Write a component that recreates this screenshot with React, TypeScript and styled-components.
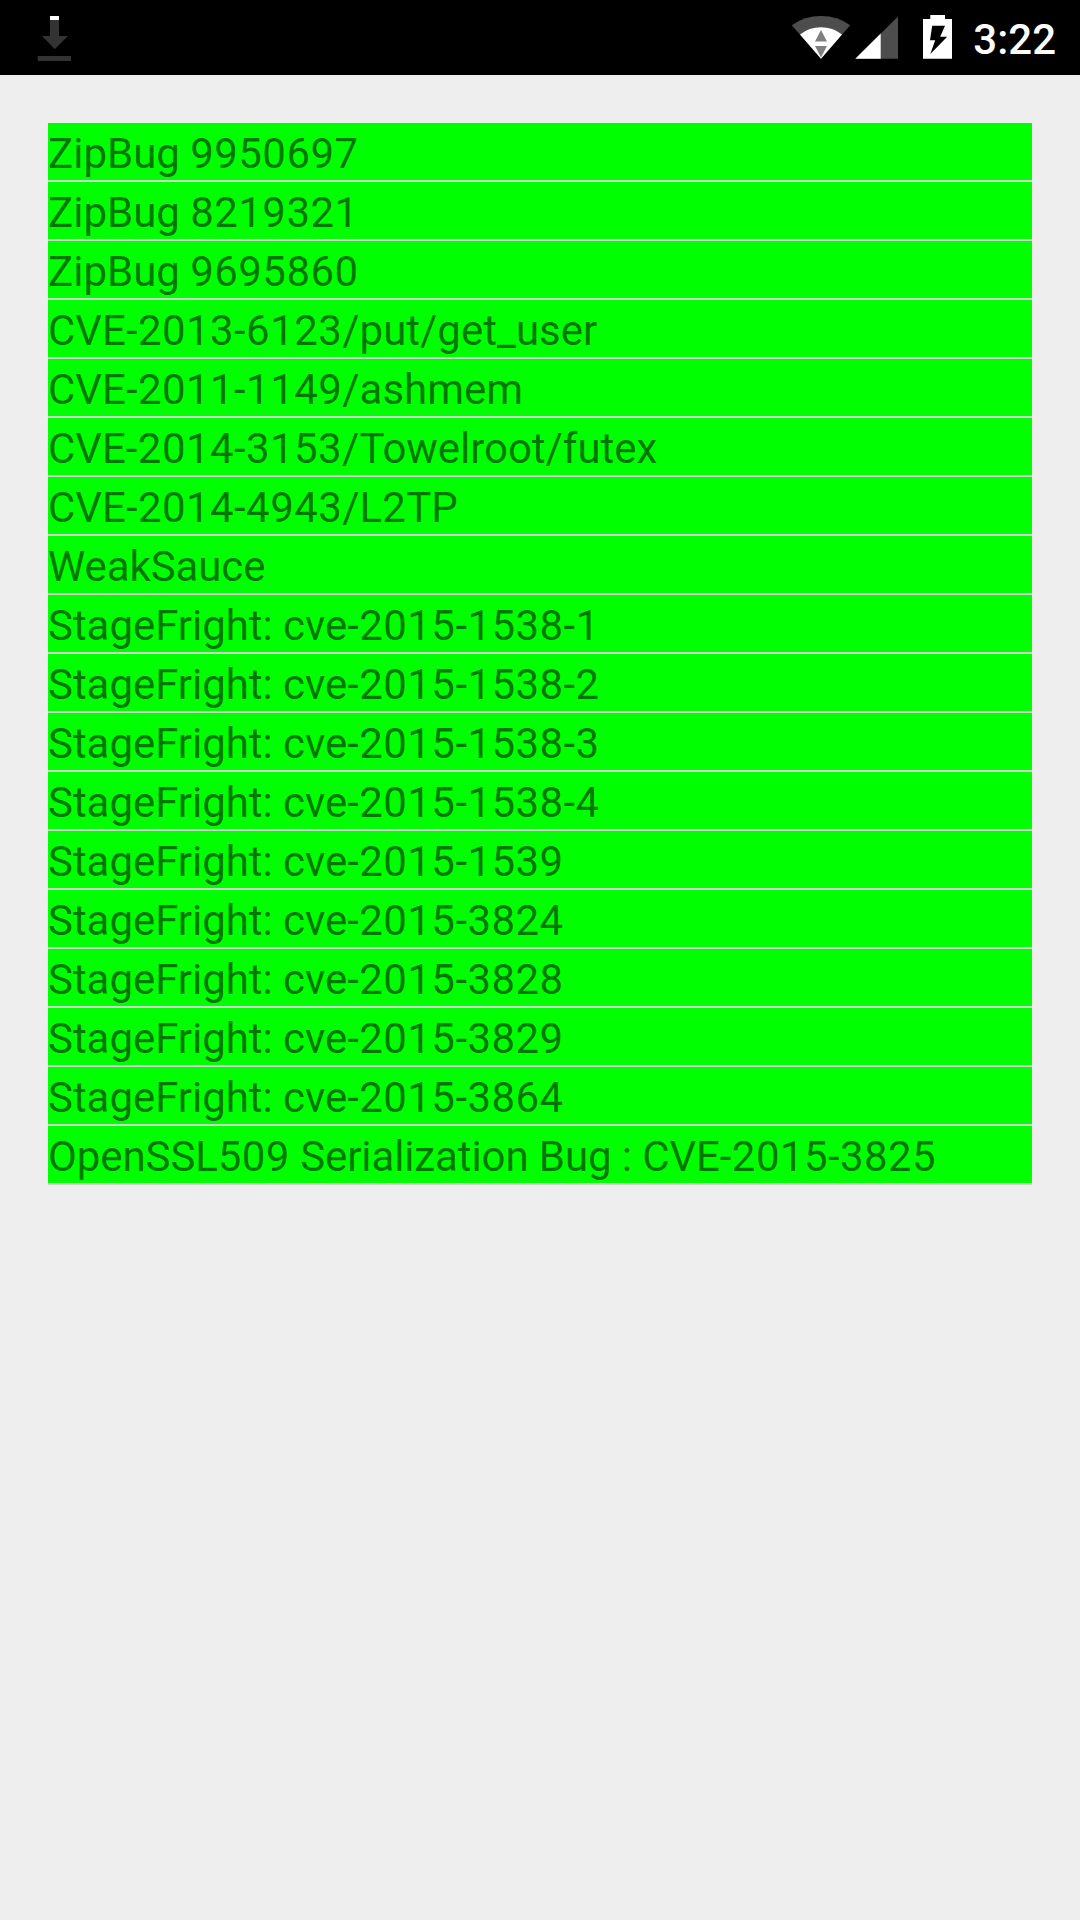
import React from "react";
import styled, { createGlobalStyle } from "styled-components";

const GlobalStyle = createGlobalStyle`
  html, body { margin: 0; background: #eeeeee; }
`;

const Screen = styled.div`
  display: flex;
  flex-direction: column;
  width: 1080px;
  height: 1920px;
  background: #eeeeee;
  font-family: Roboto, sans-serif;
  overflow: hidden;
`;

const StatusBar = styled.header`
  display: flex;
  justify-content: space-between;
  flex: none;
  height: 75px;
  box-sizing: border-box;
  padding: 0 24px 0 36px;
  background: #000;
`;

const StatusGroup = styled.div`
  display: flex;
`;

const Icon = styled.svg<{ $gap?: number }>`
  display: block;
  flex: none;
  height: 75px;
  margin-right: ${({ $gap = 0 }) => $gap}px;
`;

const Clock = styled.time`
  font-size: 42px;
  font-weight: 500;
  line-height: 49px;
  padding-top: 15px;
  color: #fff;
`;

const Content = styled.main`
  padding: 48px;
`;

const ResultList = styled.ul`
  list-style: none;
  margin: 0;
  padding: 0;
`;

const ResultRow = styled.li<{ $tracking: number }>`
  box-sizing: border-box;
  height: 59px;
  padding-top: 6px;
  border-bottom: 2px solid #d0d0d0;
  background: #00ff00;
  background-clip: padding-box;
  color: rgba(0, 0, 0, 0.54);
  font-size: 42px;
  line-height: 49px;
  letter-spacing: ${({ $tracking }) => $tracking}px;
  white-space: nowrap;
`;

const Digits = styled.span`
  letter-spacing: 0.42px;
`;

type Result = { name: string; tracking?: number };

const results: Result[] = [
  { name: "ZipBug 9950697" },
  { name: "ZipBug 8219321" },
  { name: "ZipBug 9695860" },
  { name: "CVE-2013-6123/put/get_user" },
  { name: "CVE-2011-1149/ashmem" },
  { name: "CVE-2014-3153/Towelroot/futex", tracking: -0.04 },
  { name: "CVE-2014-4943/L2TP" },
  { name: "WeakSauce", tracking: -0.1 },
  { name: "StageFright: cve-2015-1538-1", tracking: -0.04 },
  { name: "StageFright: cve-2015-1538-2", tracking: -0.04 },
  { name: "StageFright: cve-2015-1538-3", tracking: -0.04 },
  { name: "StageFright: cve-2015-1538-4", tracking: -0.04 },
  { name: "StageFright: cve-2015-1539", tracking: -0.04 },
  { name: "StageFright: cve-2015-3824", tracking: -0.04 },
  { name: "StageFright: cve-2015-3828", tracking: -0.04 },
  { name: "StageFright: cve-2015-3829", tracking: -0.04 },
  { name: "StageFright: cve-2015-3864", tracking: -0.04 },
  { name: "OpenSSL509 Serialization Bug : CVE-2015-3825", tracking: -0.1 },
];

// Numbers are set slightly wider than the letters around them.
const ResultName = ({ name }: { name: string }) => (
  <>
    {name
      .split(/([-\d]+)/)
      .map((part, i) => (i % 2 ? <Digits key={i}>{part}</Digits> : part))}
  </>
);

const DownloadIcon = () => (
  <Icon width="36" viewBox="36 0 36 75">
    <path d="M50 20H59V36H68L54.7 49.3L42 36H50Z" fill="#333" />
    <path d="M50 16H59V20H50Z" fill="#fff" />
    <path d="M37.8 56H71V61H37.8Z" fill="#333" />
  </Icon>
);

const WifiIcon = () => (
  <Icon width="60" viewBox="791 0 60 75" $gap={4}>
    <path d="M821 58.8L791.8 25.2Q804.5 16 821 16T850.2 25.2Z" fill="#4d4d4d" />
    <path d="M821 58.8L800 34.6Q809 27.3 821 27.3T842 34.6Z" fill="#fff" />
    <path d="M821 30L827 41.5H815ZM815 46H827L821 57.5Z" fill="#808080" />
  </Icon>
);

const SignalIcon = () => (
  <Icon width="43" viewBox="855 0 43 75" $gap={25}>
    <path d="M898 16.5V58.8H855.3Z" fill="#4d4d4d" />
    <path d="M880.7 33.6V58.8H855.3Z" fill="#fff" />
  </Icon>
);

const BatteryIcon = () => (
  <Icon width="29" viewBox="923 0 29 75" $gap={21}>
    <path
      d="M930.3 15H945V19H952V58.8H923V19H930.3ZM932.2 25.7L930 40.3H935.2L930.3 54L947.2 36.8H940.2L945 25.7Z"
      fill="#fff"
      fillRule="evenodd"
    />
  </Icon>
);

export default function App() {
  return (
    <>
      <GlobalStyle />
      <Screen>
        <StatusBar>
          <DownloadIcon />
          <StatusGroup>
            <WifiIcon />
            <SignalIcon />
            <BatteryIcon />
            <Clock>3:22</Clock>
          </StatusGroup>
        </StatusBar>
        <Content>
          <ResultList>
            {results.map(({ name, tracking = 0 }) => (
              <ResultRow key={name} $tracking={tracking}>
                <ResultName name={name} />
              </ResultRow>
            ))}
          </ResultList>
        </Content>
      </Screen>
    </>
  );
}
